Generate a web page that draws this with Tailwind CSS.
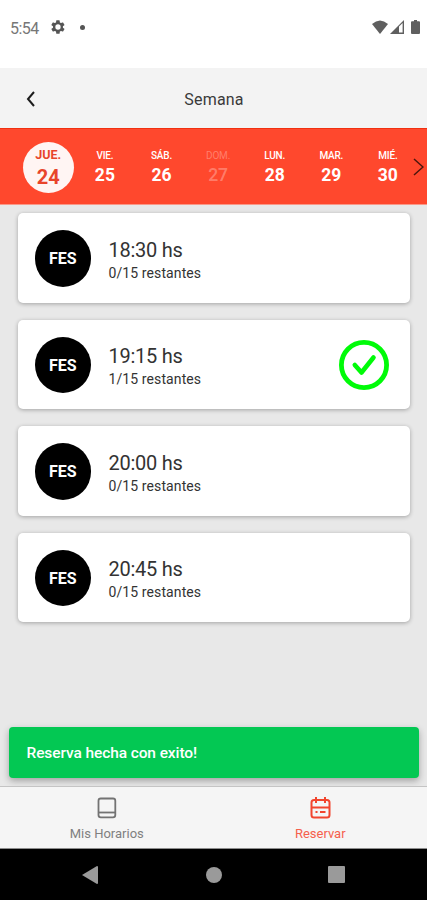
<!DOCTYPE html>
<html lang="es">
<head>
<meta charset="utf-8">
<meta name="viewport" content="width=device-width, initial-scale=1">
<title>Semana</title>
<script src="https://cdn.jsdelivr.net/npm/@tailwindcss/browser@4"></script>
</head>
<body class="bg-[#e8e8e8] font-['Roboto',sans-serif] text-[#333]">
<div class="relative flex h-[900px] w-[427px] flex-col overflow-hidden">

  <!-- Status bar -->
  <div class="flex h-[68px] shrink-0 items-start bg-white pl-[10px] pr-[7px] pt-[19px] text-[#5f5f5f]">
    <span class="w-[40px] text-[16px] leading-[19px] tracking-[-0.5px] text-[#777]">5:54</span>
    <svg class="h-4 w-4 text-[#555]" viewBox="0 0 24 24" fill="currentColor"><path fill-rule="evenodd" d="M19.4 13a7.500 7.500 0 0 0 0-2l2.100-1.600a.5.5 0 0 0 .1-.7l-2-3.400a.5.5 0 0 0-.6-.2l-2.500 1a7 7 0 0 0-1.700-1l-.4-2.700a.5.5 0 0 0-.5-.4h-4a.5.5 0 0 0-.5.4L9 5.100a7 7 0 0 0-1.700 1l-2.500-1a.5.5 0 0 0-.6.2l-2 3.400a.5.5 0 0 0 .1.700L4.500 11a7.500 7.500 0 0 0 0 2l-2.200 1.600a.5.5 0 0 0-.1.700l2 3.400c.1.200.4.300.6.200l2.500-1a7 7 0 0 0 1.700 1l.4 2.700c0 .2.200.4.500.4h4c.3 0 .5-.2.500-.4l.4-2.700a7 7 0 0 0 1.700-1l2.500 1c.2.100.5 0 .6-.2l2-3.400a.5.5 0 0 0-.1-.7zM12 16a4 4 0 1 1 0-8 4 4 0 0 1 0 8z"/></svg>
    <span class="ml-[14px] mt-[6px] h-[4.500px] w-[4.500px] rounded-full bg-[#555]"></span>
    <div class="ml-auto mt-px flex">
      <svg class="h-[14px] w-4" viewBox="0 0 16 14" fill="currentColor"><path d="M0 4Q8-3 16 4L8 14z"/></svg>
      <svg class="ml-[2px] h-[14px] w-[14px]" viewBox="0 0 14 14"><path d="M0 14 14 0V14z" fill="currentColor"/><path d="M9 6.500 12.600 3V12.600H9z" fill="#fff"/></svg>
      <svg class="ml-[7px] h-[14px] w-[9px]" viewBox="0 0 9 14" fill="currentColor"><path d="M3 0h3v1.300h2q1 0 1 1V13q0 1-1 1H1q-1 0-1-1V2.300q0-1 1-1h2z"/></svg>
    </div>
  </div>

  <!-- Header -->
  <header class="grid h-[60px] shrink-0 grid-cols-[61px_1fr_60px] items-center bg-[#f3f3f3]">
    <svg class="ml-[26px] mt-px h-4 w-[9px]" viewBox="0 0 9 16" fill="none" stroke="#1c1c1c" stroke-width="2"><path d="M8 1 2 8l6 7"/></svg>
    <h1 class="pt-[4px] text-center text-[16px] leading-5 tracking-[0.2px] text-[#3a3a3a]">Semana</h1>
  </header>

  <!-- Week strip -->
  <div class="relative h-[77px] shrink-0 border-y border-[#f03010] border-b-[#fa9888] bg-[#ff482d] text-white">
    <div class="grid h-full grid-cols-[repeat(7,56.6px)] pl-5">
      <div class="mt-[12.500px] flex h-[51px] w-[51px] flex-col items-center justify-self-center rounded-full bg-[#fff5f3] pt-[5px] text-[#e8442b]">
        <span class="text-[12.500px] font-bold leading-4">JUE.</span><span class="mt-[2px] text-[20px] font-bold leading-6">24</span>
      </div>
      <div class="flex flex-col items-center pt-[21px]"><span class="text-[10px] font-medium leading-3 tracking-[-0.2px]">VIE.</span><span class="mt-[3px] text-[17.500px] font-bold leading-5">25</span></div>
      <div class="flex flex-col items-center pt-[21px]"><span class="text-[10px] font-medium leading-3 tracking-[-0.2px]">SÁB.</span><span class="mt-[3px] text-[17.500px] font-bold leading-5">26</span></div>
      <div class="flex flex-col items-center pt-[21px] text-white/30"><span class="text-[10px] leading-3 tracking-[-0.2px]">DOM.</span><span class="mt-[3px] text-[17.500px] font-medium leading-5">27</span></div>
      <div class="flex flex-col items-center pt-[21px]"><span class="text-[10px] font-medium leading-3 tracking-[-0.2px]">LUN.</span><span class="mt-[3px] text-[17.500px] font-bold leading-5">28</span></div>
      <div class="flex flex-col items-center pt-[21px]"><span class="text-[10px] font-medium leading-3 tracking-[-0.2px]">MAR.</span><span class="mt-[3px] text-[17.500px] font-bold leading-5">29</span></div>
      <div class="flex flex-col items-center pt-[21px]"><span class="text-[10px] font-medium leading-3 tracking-[-0.2px]">MIÉ.</span><span class="mt-[3px] text-[17.500px] font-bold leading-5">30</span></div>
    </div>
    <svg class="absolute right-[3px] top-[29px] h-[18px] w-[11px]" viewBox="0 0 11 18" fill="none" stroke="#4c160e" stroke-width="1.500"><path d="M1 1l9 8-9 8"/></svg>
  </div>

  <!-- Classes -->
  <main class="flex grow flex-col gap-[17px] px-[17.500px] pt-[8px]">
    <div class="flex h-[89.500px] shrink-0 items-center rounded-[5px] bg-white pl-[17px] pr-[21px] pt-px shadow-[0_1px_4px_rgba(0,0,0,0.3)]">
      <div class="flex h-[56.500px] w-[56.500px] items-center justify-center rounded-full bg-black pt-[2px] text-[16px] font-bold text-white">FES</div>
      <div class="ml-[17.500px] pt-[5px]"><p class="text-[20px] leading-6 tracking-[-0.25px]">18:30 hs</p><p class="text-[14px] leading-[22px] tracking-[0.1px]">0/15 restantes</p></div>
    </div>
    <div class="flex h-[89.500px] shrink-0 items-center rounded-[5px] bg-white pl-[17px] pr-[21px] pt-px shadow-[0_1px_4px_rgba(0,0,0,0.3)]">
      <div class="flex h-[56.500px] w-[56.500px] items-center justify-center rounded-full bg-black pt-[2px] text-[16px] font-bold text-white">FES</div>
      <div class="ml-[17.500px] pt-[5px]"><p class="text-[20px] leading-6 tracking-[-0.25px]">19:15 hs</p><p class="text-[14px] leading-[22px] tracking-[0.1px]">1/15 restantes</p></div>
      <svg class="ml-auto h-[50px] w-[50px]" viewBox="0 0 50 50" fill="none" stroke="#00fb08" stroke-linecap="round" stroke-linejoin="round"><circle cx="25" cy="25" r="22.600" stroke-width="4.800"/><path d="M15.800 25l6.700 7.500L34.500 17.500" stroke-width="4.600"/></svg>
    </div>
    <div class="flex h-[89.500px] shrink-0 items-center rounded-[5px] bg-white pl-[17px] pr-[21px] pt-px shadow-[0_1px_4px_rgba(0,0,0,0.3)]">
      <div class="flex h-[56.500px] w-[56.500px] items-center justify-center rounded-full bg-black pt-[2px] text-[16px] font-bold text-white">FES</div>
      <div class="ml-[17.500px] pt-[5px]"><p class="text-[20px] leading-6 tracking-[-0.25px]">20:00 hs</p><p class="text-[14px] leading-[22px] tracking-[0.1px]">0/15 restantes</p></div>
    </div>
    <div class="flex h-[89.500px] shrink-0 items-center rounded-[5px] bg-white pl-[17px] pr-[21px] pt-px shadow-[0_1px_4px_rgba(0,0,0,0.3)]">
      <div class="flex h-[56.500px] w-[56.500px] items-center justify-center rounded-full bg-black pt-[2px] text-[16px] font-bold text-white">FES</div>
      <div class="ml-[17.500px] pt-[5px]"><p class="text-[20px] leading-6 tracking-[-0.25px]">20:45 hs</p><p class="text-[14px] leading-[22px] tracking-[0.1px]">0/15 restantes</p></div>
    </div>
  </main>

  <!-- Toast -->
  <div class="absolute bottom-[122.500px] left-[9px] right-[8px] flex h-[51px] items-center rounded-[4px] bg-[#03c853] pl-[17.500px] pt-[3px] text-[15.500px] font-medium tracking-[-0.1px] text-white shadow-[0_3px_7px_rgba(0,0,0,0.3)]">Reserva hecha con exito!</div>

  <!-- Tabs -->
  <nav class="relative grid h-[63px] shrink-0 grid-cols-2 border-b border-t border-b-[#8d8d8d] border-t-[#c4c4c4] bg-[#f5f5f5] text-[13px]">
    <div class="flex flex-col items-center pt-[9.500px] text-[#808080]">
      <svg class="h-[22px] w-[20px]" viewBox="0 0 20 22" fill="none" stroke="#737373" stroke-width="1.800"><rect x="1.500" y="1.500" width="16.800" height="18.800" rx="2.300"/><path d="M1.500 15.500h16.800"/></svg>
      <span class="mt-[7.500px] leading-4">Mis Horarios</span>
    </div>
    <div class="flex flex-col items-center pt-[9.500px] text-[#f5604c]">
      <svg class="h-[22px] w-[21px]" viewBox="0 0 21 22" fill="none" stroke="#f2452e" stroke-width="2"><rect x="1.500" y="3" width="18" height="17.500" rx="2.500"/><path d="M6 0v6M15 0v6M1.500 10.500h18"/><path d="M5.500 15h2M10 15h5.500"/></svg>
      <span class="mt-[7.500px] leading-4">Reservar</span>
    </div>
  </nav>

  <!-- System navigation -->
  <div class="flex h-[51px] shrink-0 items-center bg-black pl-[82px]">
    <svg class="h-[18px] w-4" viewBox="0 0 16 18" fill="#9a9a9a"><path d="M0 9 15 0q1 0 1 1V17q0 1-1 1z"/></svg>
    <span class="ml-[108px] h-4 w-4 rounded-full bg-[#9a9a9a]"></span>
    <span class="ml-[106px] h-[17px] w-[17px] rounded-[1px] bg-[#9a9a9a]"></span>
  </div>
</div>
</body>
</html>
